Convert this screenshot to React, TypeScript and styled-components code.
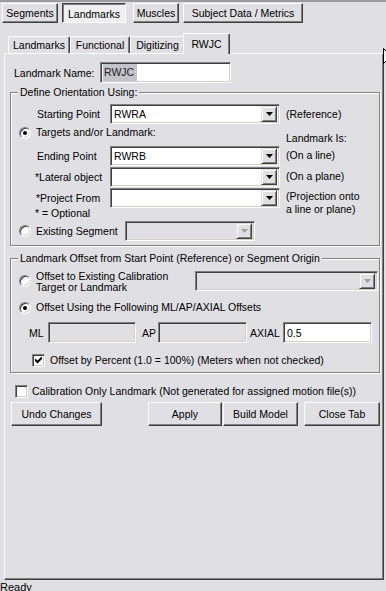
import React from "react";
import styled, { createGlobalStyle } from "styled-components";

const BG = "#e0dfe3";

const GlobalStyle = createGlobalStyle`
  html, body { margin: 0; padding: 0; background: ${BG}; overflow: hidden; }
  body { font-family: "Liberation Sans", Arial, sans-serif; font-size: 10.5px; color: #000; }
  * { box-sizing: border-box; }
`;

const Window = styled.div`
  position: relative;
  width: 386px;
  height: 600px;
  display: flex;
  flex-direction: column;
  border-top: 2px solid #9c9ca0;
`;

const OuterTabBar = styled.div`
  height: 22px;
  flex-shrink: 0;
  display: flex;
  padding: 1px 0 0 2px;
`;

const OuterTab = styled.div<{ $w: number; $ml: number; $active?: boolean }>`
  width: ${(p) => p.$w}px;
  margin-left: ${(p) => p.$ml}px;
  height: 20px;
  display: flex;
  align-items: center;
  justify-content: center;
  border: 1px solid;
  border-color: ${(p) => (p.$active ? "#404040 #fff #fff #404040" : "#fff #404040 #404040 #fff")};
  box-shadow: ${(p) =>
    p.$active ? "inset 1px 1px 0 #808080" : "inset -1px -1px 0 #808080"};
  background: ${(p) => (p.$active ? "#efeff1" : BG)};
  padding-top: ${(p) => (p.$active ? "1px" : "0")};
  white-space: nowrap;
`;

const OuterPane = styled.div`
  flex: 1;
  min-height: 0;
  display: flex;
  flex-direction: column;
  padding: 0 2px 0 4px;
`;

const InnerTabStrip = styled.div`
  height: 29px;
  flex-shrink: 0;
  display: flex;
  align-items: flex-end;
  padding-left: 4px;
`;

const InnerTab = styled.div<{ $w: number; $active?: boolean }>`
  position: relative;
  z-index: ${(p) => (p.$active ? 1 : 0)};
  width: ${(p) => p.$w}px;
  height: ${(p) => (p.$active ? 21 : 17)}px;
  margin: ${(p) => (p.$active ? "0 -2px -1px -2px" : "0")};
  display: flex;
  align-items: center;
  justify-content: center;
  background: ${BG};
  border-top: 1px solid #fff;
  border-left: 1px solid #fff;
  border-right: 1px solid #404040;
  border-radius: 2px 2px 0 0;
  box-shadow: inset -1px 0 0 #808080;
  padding-bottom: 1px;
  white-space: nowrap;
`;

const InnerPane = styled.div`
  flex: 1;
  min-height: 0;
  border-top: 1px solid #fff;
  border-left: 1px solid #fff;
  border-right: 1px solid #404040;
  border-bottom: 1px solid #404040;
  box-shadow: inset -1px -1px 0 #808080;
  padding-top: 8px;
  display: flex;
  flex-direction: column;
`;

const NameRow = styled.div`
  display: flex;
  align-items: center;
  height: 21px;
  padding-left: 9px;
`;

const FixedLabel = styled.span<{ $w: number }>`
  width: ${(p) => p.$w}px;
  flex-shrink: 0;
  white-space: nowrap;
`;

const Field = styled.div<{ $w: number; $h?: number; $disabled?: boolean }>`
  width: ${(p) => p.$w}px;
  height: ${(p) => p.$h ?? 20}px;
  flex-shrink: 0;
  display: flex;
  align-items: center;
  background: ${(p) => (p.$disabled ? BG : "#fff")};
  border: 1px solid;
  border-color: #808080 #fff #fff #808080;
  box-shadow: inset 1px 1px 0 #404040, inset -1px -1px 0 #d4d0c8;
  padding: 1px 1px 1px 3px;
  white-space: nowrap;
`;

const Highlight = styled.span`
  background: #c3c3cb;
  color: #222;
  padding: 2px 3px 3px 1px;
  margin-left: -1px;
`;

const FieldText = styled.span`
  flex: 1;
  overflow: hidden;
`;

const DropButton = styled.div<{ $disabled?: boolean }>`
  width: 16px;
  height: 16px;
  flex-shrink: 0;
  display: flex;
  align-items: center;
  justify-content: center;
  background: ${BG};
  border: 1px solid;
  border-color: ${BG} #404040 #404040 ${BG};
  box-shadow: inset 1px 1px 0 #fff, inset -1px -1px 0 #808080;
  svg {
    display: block;
  }
  path {
    fill: ${(p) => (p.$disabled ? "#a0a0a0" : "#000")};
  }
`;

const GroupBox = styled.fieldset<{ $mt: number }>`
  margin: ${(p) => p.$mt}px 3px 0 5px;
  padding: 0;
  min-width: 0;
  border: 1px solid #808080;
  box-shadow: inset 1px 1px 0 #fff, 1px 1px 0 #fff;
`;

const Legend = styled.legend`
  margin-left: 7px;
  padding: 0 2px;
  line-height: 13px;
  background: ${BG};
  white-space: nowrap;
`;

const OrientGrid = styled.div`
  display: grid;
  grid-template-columns: 99px 170px 1fr;
  grid-template-rows: 20px 21px 21px 21px 21px 11px 24px;
  padding: 5px 0 2px 0;
`;

const RowLabel = styled.span<{ $pl: number }>`
  align-self: center;
  padding-left: ${(p) => p.$pl}px;
  white-space: nowrap;
`;

const Note = styled.span<{ $align?: string; $mt?: number }>`
  align-self: ${(p) => p.$align ?? "center"};
  margin-top: ${(p) => p.$mt ?? 0}px;
  padding-left: 6px;
  line-height: 13px;
  white-space: nowrap;
`;

const CellField = styled.div`
  align-self: center;
  display: flex;
`;

const RadioRow = styled.label<{ $span?: string; $align?: string; $mt?: number }>`
  grid-column: ${(p) => p.$span ?? "auto"};
  align-self: ${(p) => p.$align ?? "center"};
  margin-top: ${(p) => p.$mt ?? 0}px;
  display: flex;
  align-items: center;
  padding-left: 8px;
  line-height: 13px;
  white-space: nowrap;
`;

const Radio = styled.span<{ $checked?: boolean }>`
  position: relative;
  width: 12px;
  height: 12px;
  flex-shrink: 0;
  margin-right: 5px;
  border-radius: 50%;
  background: #fff;
  border: 1px solid;
  border-color: #808080 #fff #fff #808080;
  box-shadow: inset 1px 1px 0 #404040, inset -1px -1px 0 #d4d0c8;
  &::after {
    content: "";
    display: ${(p) => (p.$checked ? "block" : "none")};
    position: absolute;
    left: 3px;
    top: 3px;
    width: 4px;
    height: 4px;
    border-radius: 50%;
    background: #000;
  }
`;

const Optional = styled.span`
  grid-column: 1 / 3;
  padding-left: 24px;
  line-height: 11px;
  white-space: nowrap;
`;

const ExistingRow = styled.div`
  grid-column: 1 / -1;
  display: flex;
  align-items: center;
`;

const OffsetBody = styled.div`
  display: flex;
  flex-direction: column;
  padding: 5px 0 5px 0;
`;

const FlexRow = styled.div<{ $mt?: number; $pl?: number; $h?: number }>`
  display: flex;
  align-items: center;
  margin-top: ${(p) => p.$mt ?? 0}px;
  padding-left: ${(p) => p.$pl ?? 0}px;
  height: ${(p) => (p.$h ? `${p.$h}px` : "auto")};
  white-space: nowrap;
`;

const TwoLine = styled.span`
  width: 159px;
  flex-shrink: 0;
  line-height: 11px;
  margin-top: 2px;
`;

const Spacer = styled.span<{ $w: number }>`
  width: ${(p) => p.$w}px;
  flex-shrink: 0;
`;

const Check = styled.span`
  width: 13px;
  height: 13px;
  flex-shrink: 0;
  display: flex;
  align-items: center;
  justify-content: center;
  background: #fff;
  border: 1px solid;
  border-color: #808080 #fff #fff #808080;
  box-shadow: inset 1px 1px 0 #404040, inset -1px -1px 0 #d4d0c8;
  svg {
    display: block;
  }
`;

const CheckText = styled.span<{ $ml: number }>`
  margin-left: ${(p) => p.$ml}px;
  line-height: 13px;
`;

const ButtonRow = styled.div`
  display: flex;
  margin-top: 4px;
  padding-left: 6px;
`;

const Button = styled.button<{ $w: number; $ml?: number }>`
  width: ${(p) => p.$w}px;
  height: 24px;
  margin-left: ${(p) => p.$ml ?? 0}px;
  padding: 0;
  font: inherit;
  color: #000;
  background: ${BG};
  border: 1px solid;
  border-color: #fff #404040 #404040 #fff;
  box-shadow: inset -1px -1px 0 #808080;
  white-space: nowrap;
`;

const StatusBar = styled.div`
  height: 20px;
  flex-shrink: 0;
  padding: 1px 0 0 0;
  line-height: 13px;
  font-size: 11px;
`;

const Cursor = styled.svg`
  position: absolute;
  left: 382px;
  top: 45px;
`;

function Arrow({ disabled }: { disabled?: boolean }) {
  return (
    <DropButton $disabled={disabled}>
      <svg width="7" height="4" viewBox="0 0 7 4">
        <path d="M0 0H7L3.5 4Z" />
      </svg>
    </DropButton>
  );
}

function Select({ w, value, disabled, h }: { w: number; value?: string; disabled?: boolean; h?: number }) {
  return (
    <Field $w={w} $h={h} $disabled={disabled} style={{ paddingRight: 2 }}>
      <FieldText>{value}</FieldText>
      <Arrow disabled={disabled} />
    </Field>
  );
}

function CheckBox({ checked }: { checked?: boolean }) {
  return (
    <Check>
      {checked && (
        <svg width="7" height="7" viewBox="0 0 7 7">
          <path d="M0 2.5L2.5 5L7 0.5" stroke="#000" strokeWidth="2" fill="none" />
        </svg>
      )}
    </Check>
  );
}

export default function App() {
  return (
    <>
      <GlobalStyle />
      <Window>
        <OuterTabBar>
          <OuterTab $w={56} $ml={0}>Segments</OuterTab>
          <OuterTab $w={64} $ml={4} $active>Landmarks</OuterTab>
          <OuterTab $w={46} $ml={7}>Muscles</OuterTab>
          <OuterTab $w={120} $ml={4}>Subject Data / Metrics</OuterTab>
        </OuterTabBar>
        <OuterPane>
          <InnerTabStrip>
            <InnerTab $w={62}>Landmarks</InnerTab>
            <InnerTab $w={60}>Functional</InnerTab>
            <InnerTab $w={55}>Digitizing</InnerTab>
            <InnerTab $w={47} $active>RWJC</InnerTab>
          </InnerTabStrip>
          <InnerPane>
            <NameRow>
              <FixedLabel $w={86}>Landmark Name:</FixedLabel>
              <Field $w={131} $h={21}>
                <Highlight>RWJC</Highlight>
              </Field>
            </NameRow>

            <GroupBox $mt={3}>
              <Legend>Define Orientation Using:</Legend>
              <OrientGrid>
                <RowLabel $pl={26}>Starting Point</RowLabel>
                <CellField>
                  <Select w={170} value="RWRA" />
                </CellField>
                <Note>(Reference)</Note>

                <RadioRow $span="1 / 3" $align="start" $mt={2}>
                  <Radio $checked />
                  Targets and/or Landmark:
                </RadioRow>
                <Note $align="end">Landmark Is:</Note>

                <RowLabel $pl={26}>Ending Point</RowLabel>
                <CellField>
                  <Select w={170} value="RWRB" />
                </CellField>
                <Note>(On a line)</Note>

                <RowLabel $pl={24}>*Lateral object</RowLabel>
                <CellField>
                  <Select w={170} />
                </CellField>
                <Note>(On a plane)</Note>

                <RowLabel $pl={25}>*Project From</RowLabel>
                <CellField>
                  <Select w={170} />
                </CellField>
                <Note $align="start" $mt={3} style={{ gridRow: "span 2" }}>
                  (Projection onto
                  <br />
                  a line or plane)
                </Note>

                <Optional>* = Optional</Optional>

                <ExistingRow>
                  <RadioRow style={{ width: 114 }}>
                    <Radio />
                    Existing Segment
                  </RadioRow>
                  <Select w={130} disabled />
                </ExistingRow>
              </OrientGrid>
            </GroupBox>

            <GroupBox $mt={6}>
              <Legend>Landmark Offset from Start Point (Reference) or Segment Origin</Legend>
              <OffsetBody>
                <FlexRow $h={22}>
                  <RadioRow style={{ alignSelf: "stretch" }}>
                    <Radio />
                    <TwoLine>
                      Offset to Existing Calibration
                      <br />
                      Target or Landmark
                    </TwoLine>
                  </RadioRow>
                  <Select w={183} disabled />
                </FlexRow>
                <FlexRow $mt={9} $h={13}>
                  <RadioRow>
                    <Radio $checked />
                    Offset Using the Following ML/AP/AXIAL Offsets
                  </RadioRow>
                </FlexRow>
                <FlexRow $mt={8} $pl={18}>
                  <FixedLabel $w={19}>ML</FixedLabel>
                  <Field $w={88} $h={21} $disabled />
                  <Spacer $w={6} />
                  <FixedLabel $w={16}>AP</FixedLabel>
                  <Field $w={89} $h={21} $disabled />
                  <Spacer $w={3} />
                  <FixedLabel $w={33}>AXIAL</FixedLabel>
                  <Field $w={89} $h={21}>0.5</Field>
                </FlexRow>
                <FlexRow $mt={11} $pl={21}>
                  <CheckBox checked />
                  <CheckText $ml={5}>Offset by Percent (1.0 = 100%) (Meters when not checked)</CheckText>
                </FlexRow>
              </OffsetBody>
            </GroupBox>

            <FlexRow $mt={12} $pl={10}>
              <CheckBox />
              <CheckText $ml={4}>Calibration Only Landmark (Not generated for assigned motion file(s))</CheckText>
            </FlexRow>

            <ButtonRow>
              <Button $w={91}>Undo Changes</Button>
              <Button $w={74} $ml={46}>Apply</Button>
              <Button $w={75} $ml={1}>Build Model</Button>
              <Button $w={76} $ml={6}>Close Tab</Button>
            </ButtonRow>
          </InnerPane>
        </OuterPane>
        <StatusBar>Ready</StatusBar>
        <Cursor width="5" height="19" viewBox="0 0 5 19">
          <path d="M1.5 1.5V16.5L4.5 13.5M1.5 1.5L4.5 4.5" stroke="#000" fill="#fff" strokeWidth="1" />
        </Cursor>
      </Window>
    </>
  );
}
